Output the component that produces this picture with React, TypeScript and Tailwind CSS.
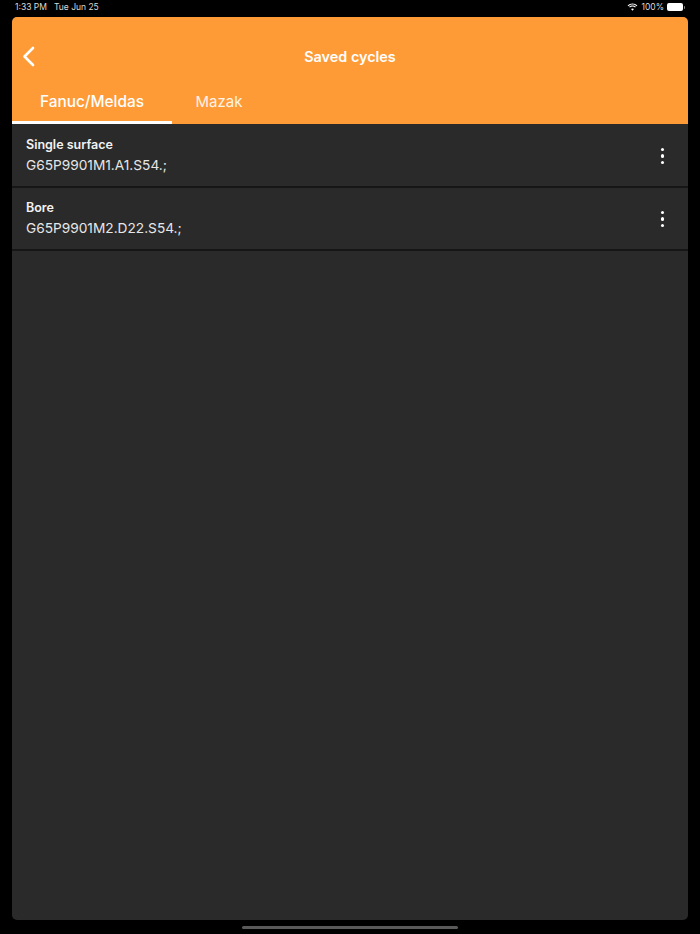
import React from "react";

function Row({ title, code }: { title: string; code: string }) {
  return (
    <div className="flex h-[63px] items-center justify-between border-b-2 border-[#161616] pl-[14px] pr-[24px]">
      <div className="flex flex-col">
        <div className="text-[12.5px] leading-[18px] font-semibold text-[#f2f2f2]">{title}</div>
        <div className="mt-[1px] text-[13.7px] leading-[20px] text-[#e6e6e6]">{code}</div>
      </div>
      <div className="flex flex-col gap-[3px] pt-[1px]">
        <div className="h-[3.5px] w-[3.5px] rounded-full bg-white" />
        <div className="h-[3.5px] w-[3.5px] rounded-full bg-white" />
        <div className="h-[3.5px] w-[3.5px] rounded-full bg-white" />
      </div>
    </div>
  );
}

export default function App() {
  return (
    <div className="flex h-[934px] w-[700px] flex-col overflow-hidden bg-black font-['Inter',sans-serif]">
      <div className="flex h-[17px] items-center justify-between pb-[3px] pl-[15px] pr-[15px] text-[8.5px] text-[#d8d8d8]">
        <div className="flex gap-[7px]">
          <span>1:33 PM</span>
          <span>Tue Jun 25</span>
        </div>
        <div className="flex items-center gap-[3px]">
          <svg width="11" height="8" viewBox="0 0 11 8" fill="white">
            <path d="M5.5 1.6c1.6 0 3 .6 4.1 1.6l.8-.8C9.1 1.1 7.4.4 5.5.4S1.9 1.1.6 2.4l.8.8c1.1-1 2.5-1.6 4.1-1.6z" />
            <path d="M5.5 3.6c1 0 1.9.4 2.6 1l.8-.8C8 2.9 6.8 2.4 5.5 2.4s-2.5.5-3.4 1.4l.8.8c.7-.6 1.6-1 2.6-1z" />
            <path d="M5.5 5.5c-.6 0-1.1.2-1.5.6l1.5 1.6L7 6.1c-.4-.4-.9-.6-1.5-.6z" />
          </svg>
          <span>100%</span>
          <div className="flex items-center">
            <div className="h-[8px] w-[16px] rounded-[2px] bg-white" />
            <div className="ml-[1px] h-[3px] w-[1px] rounded-r-full bg-[#888888]" />
          </div>
        </div>
      </div>

      <div className="mx-[12px] flex h-[903px] flex-col overflow-hidden rounded-[5px] bg-[#2a2a2a]">
        <div className="flex h-[107px] flex-col bg-[#ff9b37]">
          <div className="relative flex h-[79px] items-center justify-center">
            <svg className="absolute left-[10px] top-[29px]" width="13" height="21" viewBox="0 0 13 21" fill="none">
              <path d="M11 2 L2.5 10.5 L11 19" stroke="white" strokeWidth="2.6" strokeLinecap="round" strokeLinejoin="round" />
            </svg>
            <span className="text-[14.4px] font-semibold text-white">Saved cycles</span>
          </div>
          <div className="flex h-[28px]">
            <div className="flex h-full w-[160px] items-start justify-center border-b-[3px] border-white">
              <span className="relative -top-[1px] text-[15.4px] leading-[14px] font-medium text-white">Fanuc/Meldas</span>
            </div>
            <div className="flex h-full w-[94px] items-start justify-center">
              <span className="relative -top-[1px] text-[15px] leading-[14px] text-[#fff3e6]">Mazak</span>
            </div>
          </div>
        </div>
        <div className="flex flex-col pt-[1px]">
          <Row title="Single surface" code="G65P9901M1.A1.S54.;" />
          <Row title="Bore" code="G65P9901M2.D22.S54.;" />
        </div>
      </div>

      <div className="flex flex-1 items-center justify-center">
        <div className="h-[3px] w-[216px] rounded-full bg-[#5a5a5a]" />
      </div>
    </div>
  );
}
